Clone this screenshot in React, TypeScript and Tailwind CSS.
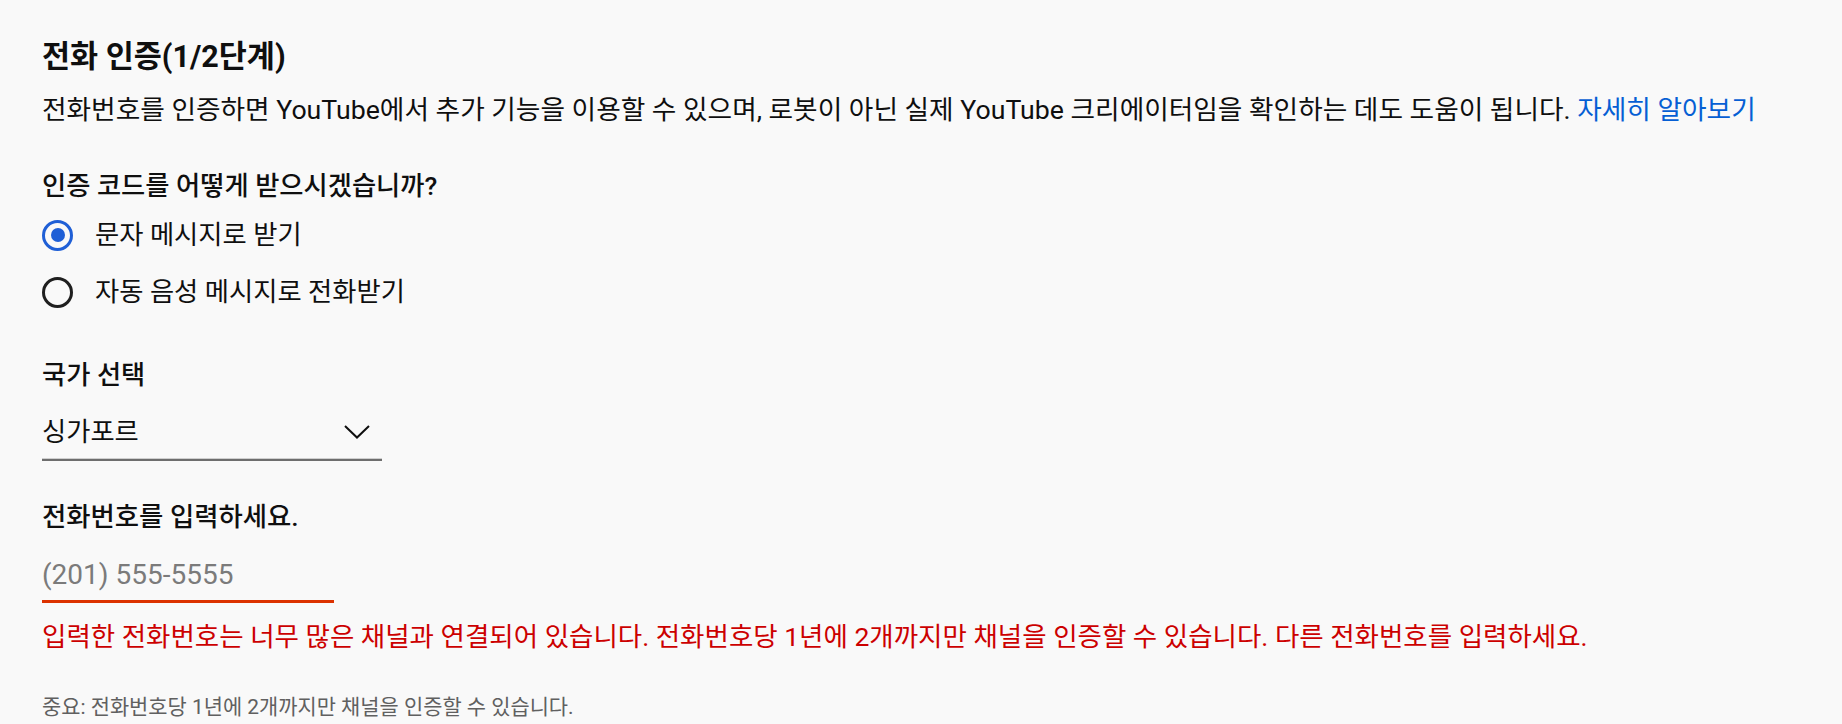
export default function App() {
  return (
    <div
      className="min-h-screen bg-[#f9f9f9] pl-[42px] pt-[39px] text-[#0f0f0f]"
      style={{ fontFamily: 'Roboto, "Noto Sans CJK KR", sans-serif' }}
    >
      {/* Title */}
      <h1 className="text-[30.5px] font-bold leading-[36px]">전화 인증(1/2단계)</h1>
      <p className="mt-[17px] text-[26.7px] leading-[36px]">
        전화번호를 인증하면 YouTube에서 추가 기능을 이용할 수 있으며, 로봇이 아닌 실제 YouTube 크리에이터임을 확인하는 데도 도움이 됩니다.{' '}
        <a href="#" className="text-[#065fd4]">자세히 알아보기</a>
      </p>

      {/* Delivery method */}
      <p className="mt-[40px] text-[26.3px] font-medium leading-[36px]">인증 코드를 어떻게 받으시겠습니까?</p>
      <div className="mt-[11px] flex flex-col gap-[17px]">
        <label className="flex h-[40px] items-center">
          <span className="flex h-[31px] w-[31px] items-center justify-center rounded-full border-[3px] border-[#1f5fd6]">
            <span className="h-[14px] w-[14px] rounded-full bg-[#1f5fd6]" />
          </span>
          <span className="ml-[22px] text-[26.3px] leading-[36px]">문자 메시지로 받기</span>
        </label>
        <label className="flex h-[40px] items-center">
          <span className="h-[31px] w-[31px] rounded-full border-[3px] border-[#1f1f1f]" />
          <span className="ml-[22px] text-[26.3px] leading-[36px]">자동 음성 메시지로 전화받기</span>
        </label>
      </div>

      {/* Country */}
      <p className="mt-[45px] text-[26.3px] font-medium leading-[36px]">국가 선택</p>
      <div className="mt-[21px] w-[340px]">
        <div className="flex items-center justify-between pb-[8px] pr-[12px]">
          <span className="text-[26.3px] leading-[36px]">싱가포르</span>
          <svg width="26" height="14" viewBox="0 0 26 14" fill="none" stroke="#0f0f0f" strokeWidth="2">
            <polyline points="1,1 13,12.5 25,1" />
          </svg>
        </div>
        <div className="h-[1px] bg-[#cfcfcf]" />
        <div className="h-[2px] bg-[#6e6e6e]" />
      </div>

      {/* Phone number */}
      <p className="mt-[38px] text-[26.4px] font-medium leading-[36px]">전화번호를 입력하세요.</p>
      <div className="mt-[22px] w-[292px] border-b-[3px] border-[#dc3200] pb-[7px]">
        <input
          className="block h-[36px] w-full bg-transparent text-[28px] leading-[36px] outline-none placeholder:text-[#7b7b7b]"
          placeholder="(201) 555-5555"
        />
      </div>
      <p className="mt-[16px] text-[26.5px] leading-[36px] text-[#cc0000]">
        입력한 전화번호는 너무 많은 채널과 연결되어 있습니다. 전화번호당 1년에 2개까지만 채널을 인증할 수 있습니다. 다른 전화번호를 입력하세요.
      </p>

      <p className="mt-[38px] text-[20.9px] leading-[28px] text-[#606060]">
        중요: 전화번호당 1년에 2개까지만 채널을 인증할 수 있습니다.
      </p>
    </div>
  )
}
